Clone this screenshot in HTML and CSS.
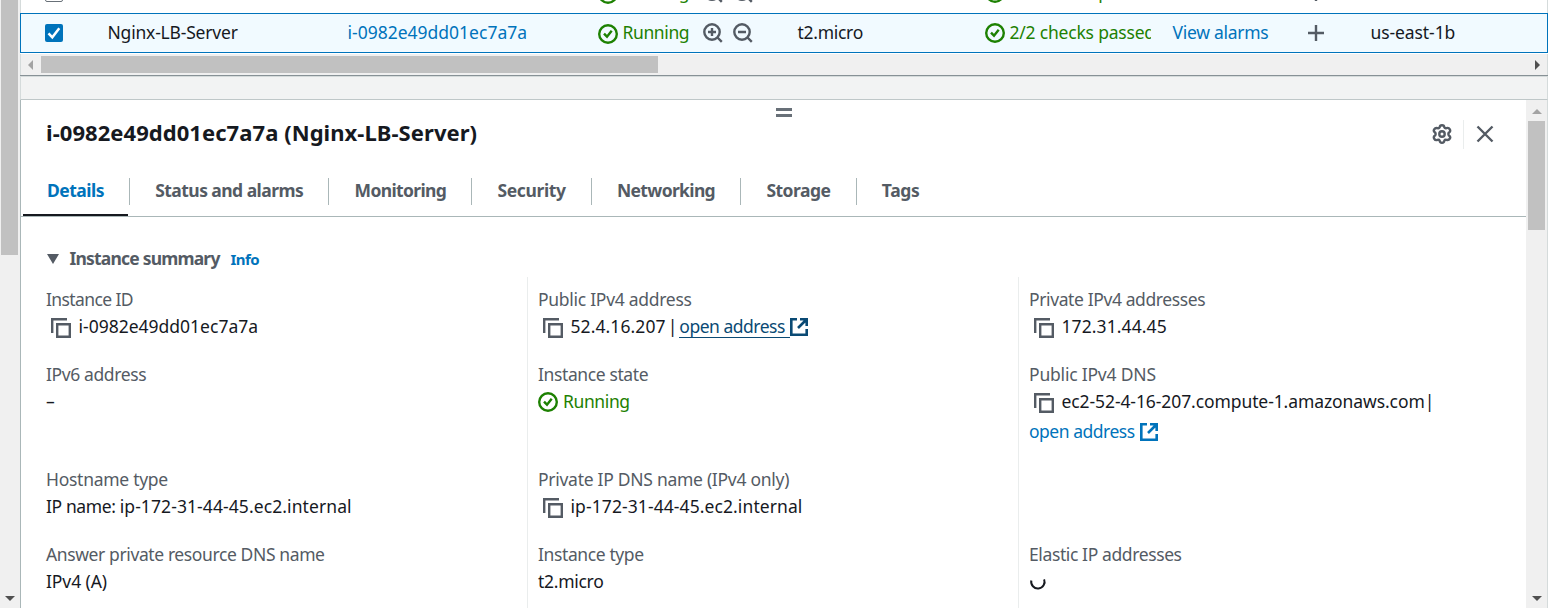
FILE: index.html
```html
<!DOCTYPE html>
<html lang="en">
<head>
<meta charset="utf-8">
<title>Instances</title>
<link rel="stylesheet" href="styles.css">
</head>
<body>
<svg class="defs" width="0" height="0" aria-hidden="true">
  <symbol id="ok" viewBox="0 0 20 20"><circle cx="10" cy="10" r="8.8"/><path d="M6 9.600l3 3.100 4.700-6"/></symbol>
  <symbol id="zoom-in" viewBox="0 0 20 20"><circle cx="9" cy="9" r="7.700"/><path d="M14.500 14.500l4.300 4.300M5 9h8M9 5v8"/></symbol>
  <symbol id="zoom-out" viewBox="0 0 20 20"><circle cx="9" cy="9" r="7.700"/><path d="M14.500 14.500l4.300 4.300M5 9h8"/></symbol>
  <symbol id="copy" viewBox="0 0 20 20"><path d="M1.200 15V1.200H16M6.200 6.200h12.600v12.600H6.200z"/></symbol>
  <symbol id="external" viewBox="0 0 18 18"><path d="M7 1.300H1.300v15.400h15.400V11M10 1.300h6.700V8M16.500 1.500L8 10"/></symbol>
  <symbol id="plus" viewBox="0 0 16 16"><path d="M8 0v16M0 8h16"/></symbol>
  <symbol id="close" viewBox="0 0 18 18"><path d="M1.500 1.500l15 15M16.500 1.500l-15 15"/></symbol>
  <symbol id="gear" viewBox="0 0 20 20"><path d="M7.600 3.500Q7.800 1.200 10 1.200T12.400 3.500Q13 4.600 14.500 4.100Q16.700 3.300 17.800 5.400T16.900 8.500Q15.900 10 16.900 11.500Q18.900 12.700 17.800 14.600T14.500 15.900Q13 15.400 12.400 16.500Q12.200 18.800 10 18.800T7.600 16.500Q7 15.400 5.500 15.900Q3.300 16.700 2.200 14.600T3.100 11.500Q4.100 10 3.100 8.500Q1.100 7.300 2.200 5.400T5.500 4.100Q7 4.600 7.600 3.500z"/><circle cx="10" cy="10" r="2.700"/></symbol>
</svg>

<div class="app">
  <div class="vbar page-bar">
    <div class="page-thumb"></div>
    <span class="tri down"></span>
  </div>

  <main class="main">
    <section class="table">
      <div class="row previous">
        <span class="box"></span>
        <span></span>
        <span></span>
        <span class="status state"><svg class="i20 ok-icon"><use href="#ok"/></svg><span class="t4">Running</span><svg class="i20 lens"><use href="#zoom-in"/></svg><svg class="i20 lens next"><use href="#zoom-out"/></svg></span>
        <span></span>
        <span class="status checks"><svg class="i20 ok-icon"><use href="#ok"/></svg><span class="t2">2/2 checks passed</span></span>
        <span></span>
        <svg class="plus"><use href="#plus"/></svg>
        <span></span>
      </div>
      <div class="row selected">
        <span class="box checked"><svg viewBox="0 0 18 18"><path d="M3.500 9.300l3.800 4 7-9"/></svg></span>
        <span class="t2">Nginx-LB-Server</span>
        <a>i-0982e49dd01ec7a7a</a>
        <span class="status state"><svg class="i20 ok-icon"><use href="#ok"/></svg><span class="t4">Running</span><svg class="i20 lens"><use href="#zoom-in"/></svg><svg class="i20 lens next"><use href="#zoom-out"/></svg></span>
        <span class="t3">t2.micro</span>
        <span class="status checks"><svg class="i20 ok-icon"><use href="#ok"/></svg><span class="t2">2/2 checks passed</span></span>
        <a class="t3">View alarms</a>
        <svg class="plus"><use href="#plus"/></svg>
        <span class="t1">us-east-1b</span>
      </div>
      <div class="hbar">
        <span class="tri left"></span>
        <div class="hthumb"></div>
        <span class="tri right"></span>
      </div>
    </section>

    <div class="gap"></div>

    <section class="panel">
      <div class="content">
        <div class="grip"></div>
        <header class="head">
          <h1>i-0982e49dd01ec7a7a (Nginx-LB-Server)</h1>
          <svg class="gear"><use href="#gear"/></svg>
          <span class="sep"></span>
          <svg class="close"><use href="#close"/></svg>
        </header>
        <nav class="tabs">
          <span class="tab active"><b class="w57">Details</b></span>
          <span class="tab"><b>Status and alarms</b></span>
          <span class="tab"><b class="tight">Monitoring</b></span>
          <span class="tab"><b class="loose">Security</b></span>
          <span class="tab"><b class="tight">Networking</b></span>
          <span class="tab"><b class="w57">Storage</b></span>
          <span class="tab"><b class="loose">Tags</b></span>
        </nav>
        <div class="summary"><span class="caret"></span><h2>Instance summary</h2><a>Info</a></div>
        <div class="grid">
          <div class="cell"><div class="label t6">Instance ID</div><div class="value"><svg class="copy"><use href="#copy"/></svg><span>i-0982e49dd01ec7a7a</span></div></div>
          <div class="cell"><div class="label t3">Public IPv4 address</div><div class="value"><svg class="copy"><use href="#copy"/></svg><span class="wide">52.4.16.207</span><span class="bar">|</span><a class="hover"><span class="t5">open address</span><svg class="ext"><use href="#external"/></svg></a></div></div>
          <div class="cell"><div class="label t4">Private IPv4 addresses</div><div class="value"><svg class="copy"><use href="#copy"/></svg><span class="wide">172.31.44.45</span></div></div>

          <div class="cell"><div class="label t4">IPv6 address</div><div class="value">–</div></div>
          <div class="cell"><div class="label t4">Instance state</div><div class="value status"><svg class="i20 ok-icon"><use href="#ok"/></svg><span class="t4">Running</span></div></div>
          <div class="cell"><div class="label t2">Public IPv4 DNS</div><div class="value"><svg class="copy"><use href="#copy"/></svg><span class="t1">ec2-52-4-16-207.compute-1.amazonaws.com</span><span class="pipe">|</span></div><div class="value"><a class="link"><span class="t5">open address</span><svg class="ext"><use href="#external"/></svg></a></div></div>

          <div class="cell"><div class="label t3">Hostname type</div><div class="value"><span><span class="t4">IP name: </span><span class="wide">ip-172-31-44-45.ec2.internal</span></span></div></div>
          <div class="cell"><div class="label t3">Private IP DNS name (IPv4 only)</div><div class="value"><svg class="copy"><use href="#copy"/></svg><span class="wide">ip-172-31-44-45.ec2.internal</span></div></div>
          <div class="cell"></div>

          <div class="cell"><div class="label t4">Answer private resource DNS name</div><div class="value t1">IPv4 (A)</div></div>
          <div class="cell"><div class="label t4">Instance type</div><div class="value t3">t2.micro</div></div>
          <div class="cell"><div class="label t4">Elastic IP addresses</div><div class="value"><svg class="spinner" viewBox="0 0 18 18"><path d="M2.300 6.500a6.700 6.700 0 1 0 12.800-1.200"/></svg></div></div>
        </div>
      </div>
      <div class="vbar panel-bar">
        <span class="tri up"></span>
        <div class="panel-thumb"></div>
        <span class="tri down"></span>
      </div>
    </section>
  </main>
</div>
</body>
</html>
```
FILE: styles.css
```css
* { box-sizing: border-box; }
body {
  margin: 0;
  height: 608px;
  overflow: hidden;
  background: #fff;
  color: #16191f;
  font: 17.5px/24px "Noto Sans", "Open Sans", sans-serif;
  white-space: nowrap;
}
.defs { position: absolute; }
svg { display: block; flex: none; fill: none; stroke: #545b64; stroke-width: 2.4; }
h1, h2 { margin: 0; }
a { color: #0073bb; }

.t1 { letter-spacing: -.09px; }
.t2 { letter-spacing: -.2px; }
.t3 { letter-spacing: -.28px; }
.t4 { letter-spacing: -.39px; }
.t5 { letter-spacing: -.49px; }
.t6 { letter-spacing: -.6px; }
.wide { letter-spacing: .09px; }

.app { display: flex; width: 1548px; height: 608px; }
.main { flex: 1; display: flex; flex-direction: column; min-width: 0; }

/* scrollbars */
.vbar { flex: none; display: flex; flex-direction: column; align-items: center; background: #f0f0f0; }
.page-bar { width: 20px; padding: 0 2px 7px 1px; }
.page-thumb { width: 17px; height: 255px; background: #c1c1c1; }
.tri { width: 0; height: 0; border: 5px solid transparent; }
.tri.down { margin-top: auto; border-width: 5px 5px 0; border-top-color: #505050; }
.tri.up { border-width: 0 5px 5px; border-bottom-color: #a3a3a3; }
.tri.left { border-width: 5px 5px 5px 0; border-right-color: #a3a3a3; }
.tri.right { margin-left: auto; border-width: 5px 0 5px 5px; border-left-color: #505050; }
.hbar { display: flex; align-items: center; height: 21px; padding: 0 7px; background: #f0f0f0; }
.hthumb { width: 617px; height: 17px; margin-left: 8px; background: #c1c1c1; }

/* instance table */
.table {
  display: flex;
  flex-direction: column;
  flex: none;
  height: 76px;
  overflow: hidden;
  border-bottom: 1px solid #879196;
}
.row {
  display: grid;
  grid-template-columns: 63px 240px 250px 200px 187px 188px 135px 63px 1fr;
  align-items: center;
  flex: none;
  height: 40px;
  padding-left: 24px;
}
.row > * { min-width: 0; }
.row > span:not(.box):not(.status), .row > a, .row .status span { padding-bottom: 2px; margin-left: -.5px; }
.row.previous, .hbar { border-left: 1px solid #d5dbdb; border-right: 1px solid #d5dbdb; }
.row.previous { margin-top: -27px; }
.row.selected { margin-bottom: 1px; border: 1px solid #0073bb; background: #f1faff; }
.box { width: 18px; height: 18px; border: 1px solid #687078; border-radius: 2px; background: #fff; }
.box.checked { border: 0; background: #0073bb; }
.box svg { width: 18px; height: 18px; stroke: #fff; stroke-width: 2.5; }
.status { display: flex; align-items: center; color: #1d8102; }
.i20 { width: 20px; height: 20px; }
.ok-icon { stroke: #1d8102; margin-right: 5px; }
.state .ok-icon { margin-top: 1px; }
.lens { margin: -1px 0 0 13.500px; }
.lens.next { margin-left: 10px; }
.checks { width: 166px; overflow: hidden; }
.plus { width: 16px; height: 16px; }

.gap { flex: none; height: 24px; background: #f2f3f3; border: 1px solid #d5dbdb; border-bottom-color: #bfc7c8; }

/* details panel */
.panel { display: flex; flex: 1; min-height: 0; border-left: 1px solid #aab7b8; border-right: 1px solid #d5dbdb; }
.content { flex: 1; min-width: 0; overflow: hidden; }
.grip { width: 16px; height: 9px; margin: 8px 0 0 755px; border: solid #687078; border-width: 3px 0; }
.head { display: flex; align-items: center; height: 34px; padding: 0 32px 0 25px; }
.head h1 { margin-right: auto; padding-bottom: 4px; font-size: 22px; line-height: 30px; letter-spacing: .06px; }
.gear { width: 20px; height: 20px; stroke-linejoin: round; }
.sep { width: 1px; height: 29px; margin: 0 12px 0 11px; background: #eaeded; }
.close { width: 18px; height: 18px; }
.tabs { display: flex; height: 66px; padding: 20px 0 0 2px; border-bottom: 1px solid #aab7b8; }
.tab { position: relative; height: 45px; padding: 7px 25.200px 0 26.200px; color: #545b64; letter-spacing: -.55px; }
.tab:first-child { padding: 7px 24px 0; margin-right: 1px; }
.tab b { display: block; }
.tab .tight { letter-spacing: -.65px; }
.tab .loose { letter-spacing: -.38px; }
.tab .w57 { letter-spacing: -.51px; }
.tab:not(:last-child)::after { content: ""; position: absolute; right: -1px; top: 7px; width: 1px; height: 27px; background: #aab7b8; }
.tab.active { color: #0073bb; border-bottom: 2px solid #16191f; }
.tab.active::after { right: -2px; }
.summary { display: flex; align-items: center; height: 24px; margin: 30px 0 6px; padding-left: 26px; }
.caret { width: 0; height: 0; border: solid transparent; border-width: 10.500px 6.500px 0; border-top-color: #545b64; }
.summary h2 { margin-left: 10.500px; padding-bottom: 2px; color: #545b64; font-size: 17.5px; letter-spacing: -.81px; }
.summary a { margin-left: 11px; font-size: 15px; font-weight: 700; letter-spacing: -.6px; }

.grid { display: grid; grid-template-columns: 481px 491px 491px; padding-left: 25px; }
.cell { padding: 11px 0 10px 10px; border-left: 1px solid #eaeded; }
.cell:nth-child(3n+1) { padding-left: 0; border-left: 0; }
.cell:nth-last-child(-n+3) { padding-bottom: 20px; }
.label { height: 24px; color: #545b64; line-height: 22px; }
.value { display: flex; align-items: center; height: 30px; padding-bottom: 2px; }
.value .ok-icon { margin-top: 2px; }
.copy { width: 20px; height: 20px; margin: 3px 7.500px 0 5px; }
.hover, .link { display: flex; align-items: center; }
.bar { margin-left: 2px; }
.hover { margin-left: 2px; color: #0a4a74; }
.hover span { border-bottom: 1px solid #0a4a74; line-height: 22px; padding-right: 5px; }
.hover .ext { stroke: #0a4a74; }
.link .ext { margin-left: 5px; stroke: #0073bb; }
.ext { width: 18px; height: 18px; margin-top: 2px; stroke-width: 2.6; }
.pipe { margin-left: 0; }
.spinner { width: 18px; height: 18px; margin-top: 3px; stroke: #16191f; stroke-width: 2; }

.panel-bar { width: 21px; padding: 9px 0 7px; }
.panel-thumb { width: 17px; height: 109px; margin-top: 7px; background: #c1c1c1; }
```
